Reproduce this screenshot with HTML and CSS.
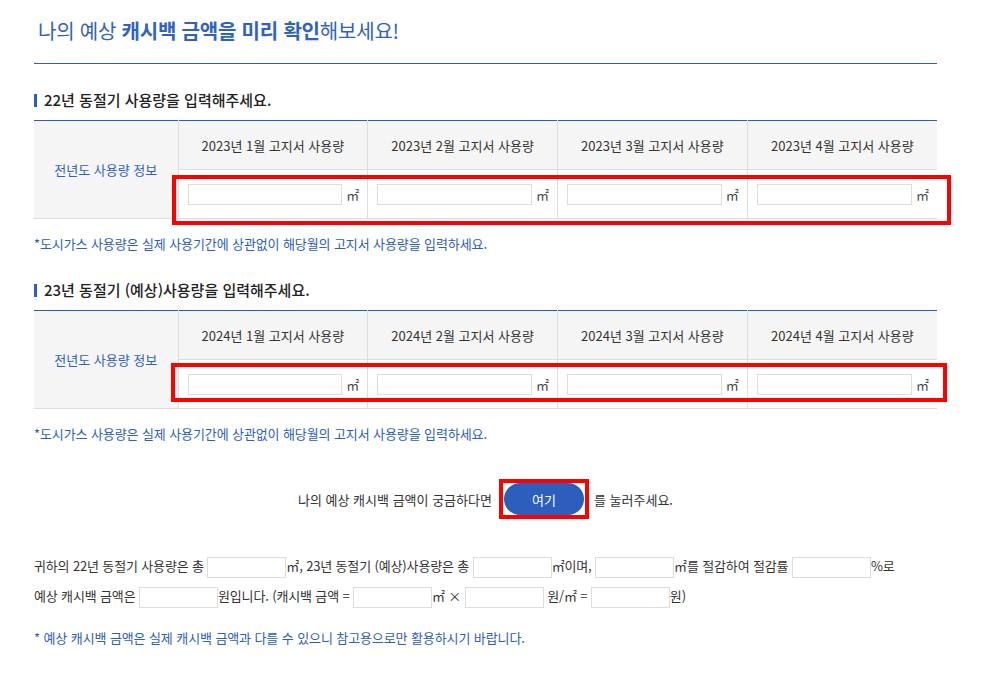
FILE: index.html
```html
<!DOCTYPE html>
<html lang="ko">
<head>
    <meta charset="UTF-8">
    <meta name="viewport" content="width=device-width, initial-scale=1.0">
    <title>캐시백 금액 확인</title>
    <link rel="stylesheet" href="styles.css">
</head>
<body>
    <div class="cashback">
        <h2 class="page-title">나의 예상 <strong>캐시백 금액을 미리 확인</strong>해보세요!</h2>

        <h3 class="section-title">22년 동절기 사용량을 입력해주세요.</h3>
        <div class="table-wrap">
            <table class="usage-table">
                <tr>
                    <th rowspan="2" class="row-head">전년도 사용량 정보</th>
                    <th>2023년 1월 고지서 사용량</th>
                    <th>2023년 2월 고지서 사용량</th>
                    <th>2023년 3월 고지서 사용량</th>
                    <th>2023년 4월 고지서 사용량</th>
                </tr>
                <tr>
                    <td><div class="field"><input type="text"><span class="unit">㎡</span></div></td>
                    <td><div class="field"><input type="text"><span class="unit">㎡</span></div></td>
                    <td><div class="field"><input type="text"><span class="unit">㎡</span></div></td>
                    <td><div class="field"><input type="text"><span class="unit">㎡</span></div></td>
                </tr>
            </table>
            <div class="mark mark-first"></div>
        </div>
        <p class="note">*도시가스 사용량은 실제 사용기간에 상관없이 해당월의 고지서 사용량을 입력하세요.</p>

        <h3 class="section-title">23년 동절기 (예상)사용량을 입력해주세요.</h3>
        <div class="table-wrap">
            <table class="usage-table">
                <tr>
                    <th rowspan="2" class="row-head">전년도 사용량 정보</th>
                    <th>2024년 1월 고지서 사용량</th>
                    <th>2024년 2월 고지서 사용량</th>
                    <th>2024년 3월 고지서 사용량</th>
                    <th>2024년 4월 고지서 사용량</th>
                </tr>
                <tr>
                    <td><div class="field"><input type="text"><span class="unit">㎡</span></div></td>
                    <td><div class="field"><input type="text"><span class="unit">㎡</span></div></td>
                    <td><div class="field"><input type="text"><span class="unit">㎡</span></div></td>
                    <td><div class="field"><input type="text"><span class="unit">㎡</span></div></td>
                </tr>
            </table>
            <div class="mark mark-second"></div>
        </div>
        <p class="note">*도시가스 사용량은 실제 사용기간에 상관없이 해당월의 고지서 사용량을 입력하세요.</p>

        <div class="check-row">
            <span>나의 예상 캐시백 금액이 궁금하다면</span>
            <span class="btn-mark"><button class="check-btn">여기</button></span>
            <span>를 눌러주세요.</span>
        </div>

        <div class="result">
            <p>귀하의 22년 동절기 사용량은 총 <input type="text" class="small">㎡, 23년 동절기 (예상)사용량은 총 <input type="text" class="small">㎡이며, <input type="text" class="small">㎡를 절감하여 절감률 <input type="text" class="small">%로</p>
            <p>예상 캐시백 금액은 <input type="text" class="small">원입니다. (캐시백 금액 = <input type="text" class="small">㎡ × <input type="text" class="small"> 원/㎡ = <input type="text" class="small">원)</p>
        </div>

        <p class="note last-note">* 예상 캐시백 금액은 실제 캐시백 금액과 다를 수 있으니 참고용으로만 활용하시기 바랍니다.</p>
    </div>
</body>
</html>
```

FILE: styles.css
```css
* {
  box-sizing: border-box;
  margin: 0;
  padding: 0;
}

body {
  font-family: "Noto Sans CJK KR", sans-serif;
  font-size: 13px;
  color: #333;
  background: #fff;
}

.cashback {
  width: 903px;
  margin-left: 34px;
}

.page-title {
  padding: 18px 0 19px 4px;
  font-size: 20px;
  line-height: 26px;
  font-weight: 400;
  letter-spacing: -0.2px;
  color: #2f62c0;
  border-bottom: 1px solid #2b5ebd;
}

.page-title strong {
  font-weight: 700;
}

.section-title {
  display: flex;
  align-items: center;
  gap: 7px;
  margin-top: 26px;
  font-size: 15px;
  line-height: 20px;
  font-weight: 500;
  color: #222;
}

.section-title::before {
  content: "";
  width: 3px;
  height: 13px;
  background: #2b5ebd;
}

.table-wrap {
  position: relative;
  margin-top: 10px;
}

.usage-table {
  width: 100%;
  border-collapse: collapse;
  border-top: 1px solid #2b5ebd;
  border-bottom: 1px solid #ddd;
  table-layout: fixed;
}

.usage-table th,
.usage-table td {
  height: 49px;
  border-left: 1px solid #ddd;
  text-align: center;
  font-weight: 400;
}

.usage-table th {
  background: #f5f5f5;
  border-bottom: 1px solid #ddd;
  color: #333;
}

.usage-table th.row-head {
  width: 144px;
  border-left: none;
  color: #2f62c0;
}

.field {
  display: flex;
  align-items: center;
  gap: 4px;
  padding: 0 9px;
}

.field input {
  flex: 1;
  min-width: 0;
  height: 21px;
  border: 1px solid #ddd;
}

.unit {
  width: 12px;
  letter-spacing: -1px;
  color: #444;
}

.mark {
  position: absolute;
  border: 4px solid #ff0000;
  pointer-events: none;
}

.mark-first {
  left: 138px;
  top: 55px;
  width: 779px;
  height: 50px;
}

.mark-second {
  left: 137px;
  top: 53px;
  width: 776px;
  height: 39px;
}

.note {
  margin-top: 15px;
  line-height: 20px;
  letter-spacing: -0.1px;
  color: #2b5ebd;
}

.check-row {
  display: flex;
  justify-content: center;
  align-items: center;
  height: 40px;
  margin-top: 35px;
  color: #333;
}

.btn-mark {
  display: flex;
  margin: 0 5px 0 7px;
  border: 4px solid #ff0000;
  padding: 0 1px;
}

.check-btn {
  width: 80px;
  height: 32px;
  border: none;
  border-radius: 16px;
  background: #2b5ebd;
  color: #fff;
  font-family: inherit;
  font-size: 13px;
  cursor: pointer;
}

.result {
  margin-top: 32px;
  letter-spacing: -0.15px;
  color: #333;
}

.result p {
  line-height: 30px;
}

.result input.small {
  width: 79px;
  height: 21px;
  border: 1px solid #ddd;
  vertical-align: middle;
}

.last-note {
  margin-top: 17px;
}
```
